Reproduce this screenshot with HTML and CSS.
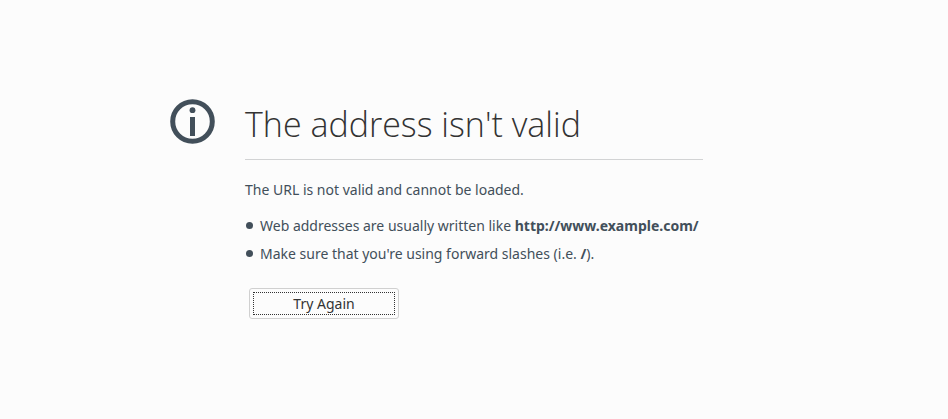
FILE: index.html
```html
<!DOCTYPE html>
<html lang="en">
<head>
<meta charset="utf-8">
<meta name="viewport" content="width=device-width, initial-scale=1">
<title>The address isn't valid</title>
<link rel="stylesheet" href="styles.css">
</head>
<body>
<main class="error-page">
  <svg class="info-icon" viewBox="0 0 45 45" aria-hidden="true">
    <circle cx="22.5" cy="22.5" r="19.8" fill="none" stroke="currentColor" stroke-width="5"/>
    <circle cx="22.5" cy="11.2" r="2.9" fill="currentColor"/>
    <rect x="20" y="18" width="5" height="19" fill="currentColor"/>
  </svg>
  <div class="content">
    <h1 class="title">The address isn't valid</h1>
    <p class="summary">The URL is not valid and cannot be loaded.</p>
    <ul class="hints">
      <li class="hint">Web addresses are usually written like <strong>http://www.example.com/</strong></li>
      <li class="hint">Make sure that you're using forward slashes (i.e. <strong>/</strong>).</li>
    </ul>
    <button class="retry" type="button" autofocus><span class="retry-label">Try Again</span></button>
  </div>
</main>
</body>
</html>
```
FILE: styles.css
```css
* {
  box-sizing: border-box;
}

body {
  margin: 0;
  background: #fcfcfc;
  color: #424f5a;
  font: 14px/20px "Segoe UI", "Noto Sans", "Open Sans", sans-serif;
}

.error-page {
  display: grid;
  grid-template-columns: 1fr minmax(0, 458px) 1fr;
  align-content: center;
  min-height: 100vh;
  padding-bottom: 1px;
}

.info-icon {
  justify-self: end;
  width: 45px;
  height: 45px;
  margin-right: 30px;
}

.title {
  margin: 0 0 20px;
  padding-bottom: 10px;
  border-bottom: 1px solid #d2d3d4;
  color: #333;
  font: 300 34px/50px "Segoe UI Light", "Open Sans", sans-serif;
}

.summary {
  margin: 0 0 16px;
}

.hints {
  display: grid;
  gap: 8px;
  margin: 0 0 24px;
  padding: 0;
  list-style: none;
}

.hint {
  display: flow-root;
  padding-left: 15px;
}

.hint::before {
  content: "";
  float: left;
  width: 7px;
  height: 7px;
  margin: 6px 0 0 -14px;
  border-radius: 50%;
  background: currentColor;
}

.retry {
  display: block;
  width: 150px;
  margin: 0 4px;
  padding: 3px;
  border: 1px solid #d0d0d0;
  border-radius: 3px;
  outline: none;
  background: #fcfcfc;
  color: #333;
  font: inherit;
}

.retry-label {
  display: block;
  border: 1px dotted #333;
  line-height: 21px;
}
```
